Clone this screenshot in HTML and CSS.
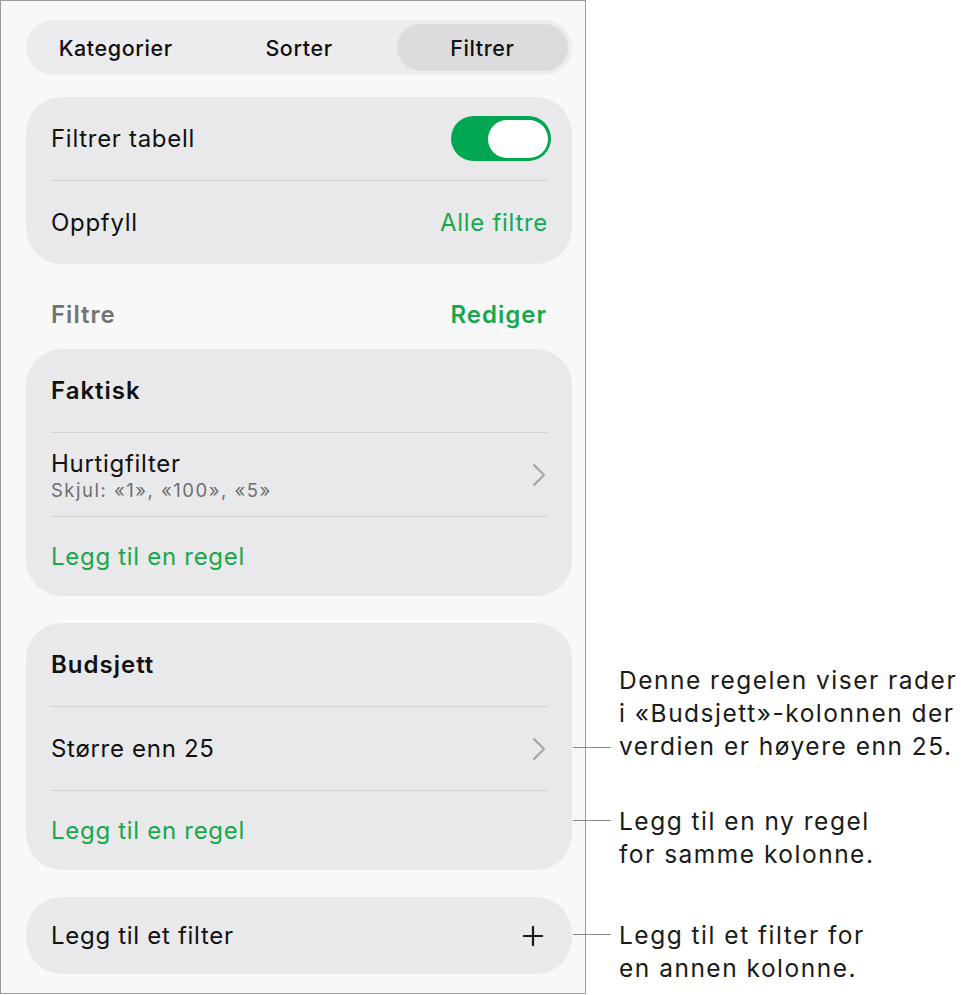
FILE: index.html
```html
<!DOCTYPE html>
<html lang="nb">
<head>
  <meta charset="UTF-8" />
  <meta name="viewport" content="width=device-width, initial-scale=1.0" />
  <title>Filtrer</title>
  <link rel="stylesheet" href="styles.css">
</head>
<body>
  <div class="figure">
    <div class="panel">
      <div class="segmented">
        <button class="segment">Kategorier</button>
        <button class="segment">Sorter</button>
        <button class="segment active">Filtrer</button>
      </div>

      <div class="card">
        <div class="row">
          <span class="label">Filtrer tabell</span>
          <span class="toggle on"><span class="knob"></span></span>
        </div>
        <div class="row">
          <span class="label">Oppfyll</span>
          <span class="link">Alle filtre</span>
        </div>
      </div>

      <div class="section-head">
        <span class="section-title">Filtre</span>
        <span class="link strong">Rediger</span>
      </div>

      <div class="card">
        <div class="row head"><span class="label strong">Faktisk</span></div>
        <div class="row">
          <div class="stack">
            <span class="label">Hurtigfilter</span>
            <span class="sub">Skjul: «1», «100», «5»</span>
          </div>
          <svg class="chevron" viewBox="0 0 14 24"><polyline points="2,2 12,12 2,22" /></svg>
        </div>
        <div class="row add"><span class="link">Legg til en regel</span></div>
      </div>

      <div class="card">
        <div class="row head"><span class="label strong">Budsjett</span></div>
        <div class="row">
          <span class="label">Større enn 25</span>
          <svg class="chevron" viewBox="0 0 14 24"><polyline points="2,2 12,12 2,22" /></svg>
        </div>
        <div class="row add"><span class="link">Legg til en regel</span></div>
      </div>

      <div class="card">
        <div class="row add">
          <span class="label">Legg til et filter</span>
          <svg class="plus" viewBox="0 0 24 24"><path d="M12 2v20M2 12h20" /></svg>
        </div>
      </div>
    </div>

    <div class="notes">
      <p class="note note-rule">Denne regelen viser rader<br>i «Budsjett»-kolonnen der<br>verdien er høyere enn 25.</p>
      <p class="note note-add">Legg til en ny regel<br>for samme kolonne.</p>
      <p class="note note-filter">Legg til et filter for<br>en annen kolonne.</p>
    </div>
  </div>
</body>
</html>
```

FILE: styles.css
```css
:root {
  --green: #16a84c;
  --card-bg: #e9e9eb;
  --line: #d2d2d4;
  --font: 'Inter', 'Liberation Sans', sans-serif;
}

body {
  margin: 0;
  background: #fff;
  font-family: var(--font);
  color: #111;
}

.figure {
  display: flex;
  align-items: flex-start;
}

.panel {
  box-sizing: border-box;
  width: 586px;
  height: 994px;
  padding: 19px 13px 0 25px;
  background: #f8f8f8;
  border: 1.5px solid #9a9a9a;
  border-left-width: 1px;
  flex-shrink: 0;
}

/* tabs */
.segmented {
  display: grid;
  grid-template-columns: repeat(3, 1fr);
  gap: 12px;
  padding: 4px;
  height: 47px;
  background: #ececee;
  border-radius: 28px;
}

.segment {
  border: none;
  background: none;
  font-family: var(--font);
  font-size: 21.5px;
  font-weight: 500;
  letter-spacing: 0.6px;
  color: #111;
  border-radius: 24px;
  padding: 0;
}

.segment.active {
  background: #dcdcdf;
}

/* grouped lists */
.card {
  background: var(--card-bg);
  border-radius: 36px;
  padding: 0 24px 0 25px;
  margin-top: 27px;
}

.segmented + .card {
  margin-top: 22px;
}

.section-head + .card {
  margin-top: 0;
}

.row {
  display: flex;
  align-items: center;
  justify-content: space-between;
  height: 83px;
  border-top: 1.5px solid var(--line);
}

.row:first-child {
  border-top: none;
}

.row.add {
  height: 79px;
}

.card .row.add:only-child {
  height: 77px;
}

.label,
.link {
  font-size: 24px;
  letter-spacing: 0.7px;
}

.link {
  color: var(--green);
}

.strong {
  font-weight: 600;
  letter-spacing: 1px;
}

.stack {
  display: flex;
  flex-direction: column;
  gap: 1px;
}

.sub {
  font-size: 18.5px;
  letter-spacing: 1.5px;
  color: #6e6e70;
}

.chevron {
  width: 14px;
  height: 24px;
  margin-right: 2px;
  fill: none;
  stroke: #a3a3a7;
  stroke-width: 2;
  stroke-linecap: round;
  stroke-linejoin: round;
}

.plus {
  width: 22px;
  height: 22px;
  margin-right: 4px;
  stroke: #1a1a1a;
  stroke-width: 2.4;
  stroke-linecap: round;
}

.toggle {
  width: 100px;
  height: 45px;
  border-radius: 23px;
  background: #00a650;
  display: flex;
  align-items: center;
  justify-content: flex-end;
  padding: 0 3px;
  box-sizing: border-box;
  margin-right: -3px;
}

.knob {
  width: 60px;
  height: 38px;
  border-radius: 19px;
  background: #fff;
}

.section-head {
  display: flex;
  justify-content: space-between;
  align-items: center;
  padding: 37px 25px 20px;
  line-height: 28px;
}

.section-title {
  font-size: 24px;
  font-weight: 600;
  letter-spacing: 1px;
  color: #737375;
}

/* callouts beside the panel */
.notes {
  position: relative;
  flex: 1;
  height: 995px;
}

.note {
  position: absolute;
  left: 33px;
  margin: 0;
  font-size: 24.5px;
  letter-spacing: 1.5px;
  line-height: 33px;
  color: #1a1a1a;
  white-space: nowrap;
}

.note::before {
  content: "";
  position: absolute;
  left: -46px;
  width: 38px;
  border-top: 1.5px solid #8a8a8a;
}

.note-rule {
  top: 664px;
}

.note-rule::before {
  top: 83px;
}

.note-add {
  top: 805px;
}

.note-add::before {
  top: 15px;
}

.note-filter {
  top: 919px;
}

.note-filter::before {
  top: 15px;
}
```
